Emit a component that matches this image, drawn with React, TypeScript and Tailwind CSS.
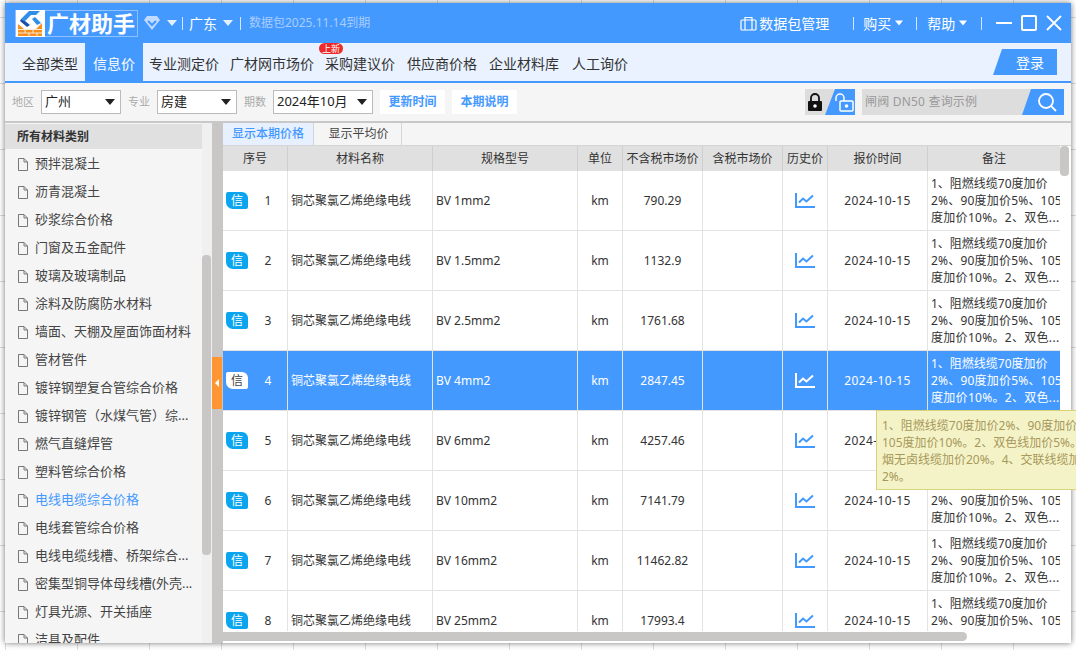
const FONT = "font-['Noto_Sans','Noto_Sans_CJK_SC',sans-serif]";

const CATEGORIES = [
  "预拌混凝土",
  "沥青混凝土",
  "砂浆综合价格",
  "门窗及五金配件",
  "玻璃及玻璃制品",
  "涂料及防腐防水材料",
  "墙面、天棚及屋面饰面材料",
  "管材管件",
  "镀锌钢塑复合管综合价格",
  "镀锌钢管（水煤气管）综...",
  "燃气直缝焊管",
  "塑料管综合价格",
  "电线电缆综合价格",
  "电线套管综合价格",
  "电线电缆线槽、桥架综合...",
  "密集型铜导体母线槽(外壳...",
  "灯具光源、开关插座",
  "洁具及配件",
];

const ROWS = [
  { no: 1, spec: "BV 1mm2", price: "790.29" },
  { no: 2, spec: "BV 1.5mm2", price: "1132.9" },
  { no: 3, spec: "BV 2.5mm2", price: "1761.68" },
  { no: 4, spec: "BV 4mm2", price: "2847.45" },
  { no: 5, spec: "BV 6mm2", price: "4257.46" },
  { no: 6, spec: "BV 10mm2", price: "7141.79" },
  { no: 7, spec: "BV 16mm2", price: "11462.82" },
  { no: 8, spec: "BV 25mm2", price: "17993.4" },
];

function Caret({ className }: { className: string }) {
  return (
    <svg width="10" height="6" viewBox="0 0 10 6" className={className}>
      <path d="M0 0h10L5 6z" fill="currentColor" />
    </svg>
  );
}

function Divider({ className }: { className: string }) {
  return <div className={"h-[13px] w-px bg-[#d5e6ff] " + className} />;
}

function Logo() {
  return (
    <div className="flex h-[27px] w-[123px] items-center border border-[#8fc0ff]">
      <svg width="29" height="27" viewBox="0 0 29 27" className="shrink-0 bg-white">
        <path d="M13 1h11l-4 4h-5L9 11 5 9z" fill="#2f8fe8" />
        <path d="M5 9l4 2 5 4-3 2-7-6z" fill="#1b4fa8" />
        <path d="M16 9l3-2 6 6-4 2z" fill="#2f8fe8" />
        <path d="M2 14l6 5h12l6-6v13H2z" fill="#f5901e" />
        <path d="M2 19.500h24M2 23h24M9 19.500V23M17 19.500V23M13 23v3M21 23v3" stroke="white" strokeWidth="0.8" fill="none" />
      </svg>
      <span className="ml-[2px] whitespace-nowrap text-[22px] leading-[27px] font-bold text-white">广材助手</span>
    </div>
  );
}

function TitleBar() {
  return (
    <div className="flex h-10 shrink-0 items-center bg-[#4499ff] text-[14px] text-white">
      <div className="ml-[10px]">
        <Logo />
      </div>
      <svg width="18" height="16" viewBox="0 0 18 16" className="ml-[5px]">
        <path d="M4 1h10l3 4-8 10L1 5z" fill="#c0dbff" />
        <path d="M5 6l4 4 4-4" fill="none" stroke="#4499ff" strokeWidth="2.200" />
      </svg>
      <Caret className="ml-[6px] text-[#e3efff]" />
      <Divider className="ml-[5px]" />
      <span className="ml-[6px]">广东</span>
      <Caret className="ml-[6px] text-[#e3efff]" />
      <Divider className="ml-[7px]" />
      <span className="ml-2 text-[12px] whitespace-nowrap text-[#a9cdff]">数据包2025.11.14到期</span>
      <svg width="17" height="15" viewBox="0 0 17 15" className="ml-[370px]" fill="none" stroke="white" strokeWidth="1.2">
        <rect x="1" y="4" width="15" height="10" rx="1" />
        <path d="M5 14V1.500h7V14" />
      </svg>
      <span className="ml-[2px] whitespace-nowrap">数据包管理</span>
      <Divider className="ml-6" />
      <span className="ml-[9px]">购买</span>
      <Caret className="ml-1 w-2 text-white" />
      <Divider className="ml-[13px]" />
      <span className="ml-[10px]">帮助</span>
      <Caret className="ml-1 w-2 text-white" />
      <Divider className="ml-[14px]" />
      <svg width="16" height="16" viewBox="0 0 16 16" className="ml-[14px]">
        <path d="M0 8h16" stroke="white" strokeWidth="2" />
      </svg>
      <svg width="16" height="16" viewBox="0 0 16 16" className="ml-[9px]">
        <rect x="1" y="1" width="14" height="14" rx="1" fill="none" stroke="white" strokeWidth="2" />
      </svg>
      <svg width="16" height="16" viewBox="0 0 16 16" className="ml-[9px]">
        <path d="M1 1l14 14M15 1 1 15" stroke="white" strokeWidth="1.800" />
      </svg>
    </div>
  );
}

function TabBar() {
  return (
    <div className="flex h-10 shrink-0 border-b-2 border-[#4499ff] bg-[#eaf2ff] text-[14px] whitespace-nowrap text-[#333]">
      <div className="ml-[17px] flex items-center pt-[2px]">全部类型</div>
      <div className="ml-[7px] flex w-[58px] items-center justify-center bg-[#4499ff] pt-[2px] text-white">信息价</div>
      <div className="ml-[6px] flex items-center pt-[2px]">专业测定价</div>
      <div className="ml-[11px] flex items-center pt-[2px]">广材网市场价</div>
      <div className="relative ml-[11px] flex items-center pt-[2px]">
        采购建议价
        <span className="absolute top-0 left-[-6px] flex h-[11px] w-6 items-center justify-center rounded-full bg-[#ee2a2a] text-[9px] text-white">上新</span>
      </div>
      <div className="ml-3 flex items-center pt-[2px]">供应商价格</div>
      <div className="ml-3 flex items-center pt-[2px]">企业材料库</div>
      <div className="ml-[13px] flex items-center pt-[2px]">人工询价</div>
      <div className="mt-[6px] ml-[365px] flex h-[26px] w-16 items-center justify-center bg-[#4499ff] pl-[10px] text-white [clip-path:polygon(9px_0,100%_0,100%_100%,0_100%)]">登录</div>
    </div>
  );
}

function Select({ value, width }: { value: string; width: string }) {
  return (
    <div className={"flex h-6 items-center justify-between border border-[#bbb] bg-white pr-[5px] pl-[3px] text-[13px] text-[#222] " + width}>
      <span>{value}</span>
      <Caret className="text-[#222]" />
    </div>
  );
}

function Toolbar() {
  return (
    <div className="flex h-10 shrink-0 items-center border-b-2 border-[#c8c8c8] bg-[#f5f5f5] text-[12px] text-[#aaa]">
      <span className="ml-[7px] w-[22px] text-[11px] whitespace-nowrap">地区</span>
      <div className="ml-[7px]"><Select value="广州" width="w-20" /></div>
      <span className="ml-[7px] w-[22px] text-[11px] whitespace-nowrap">专业</span>
      <div className="ml-[7px]"><Select value="房建" width="w-20" /></div>
      <span className="ml-[7px] w-[22px] text-[11px] whitespace-nowrap">期数</span>
      <div className="ml-[7px]"><Select value="2024年10月" width="w-[100px]" /></div>
      <div className="ml-[7px] flex h-6 w-[65px] items-center justify-center bg-white font-bold text-[#4499ff]">更新时间</div>
      <div className="ml-[7px] flex h-6 w-[65px] items-center justify-center bg-white font-bold text-[#4499ff]">本期说明</div>

      <div className="relative ml-[288px] flex h-[26px] w-[50px] items-center bg-[#ddd]">
        <svg width="16" height="19" viewBox="0 0 16 19" className="ml-[2px]">
          <path d="M4 9V5a4 4 0 0 1 8 0v4" fill="none" stroke="#111" strokeWidth="1.800" />
          <rect x="1" y="8" width="14" height="10" rx="1" fill="#111" />
          <circle cx="8" cy="13" r="1.800" fill="white" />
        </svg>
        <div className="absolute inset-y-0 right-0 flex w-[30px] items-center justify-end bg-[#4499ff] pr-px [clip-path:polygon(10px_0,100%_0,100%_100%,0_100%)]">
          <svg width="19" height="19" viewBox="0 0 19 19">
            <path d="M1 8V5a4 4 0 0 1 8 0v3" fill="none" stroke="white" strokeWidth="1.500" />
            <rect x="5" y="8" width="13" height="10" rx="1" fill="none" stroke="white" strokeWidth="1.500" />
            <circle cx="11.500" cy="13" r="1.800" fill="white" />
          </svg>
        </div>
      </div>

      <div className="relative ml-[7px] flex h-[26px] w-[202px] items-center bg-[#ddd] pl-[3px] tracking-[0.2px] text-[#999]">
        闸阀 DN50 查询示例
        <div className="absolute inset-y-0 right-0 flex w-[42px] items-center justify-end bg-[#4499ff] pr-[7px] [clip-path:polygon(9px_0,100%_0,100%_100%,0_100%)]">
          <svg width="20" height="20" viewBox="0 0 20 20" fill="none" stroke="white" strokeWidth="1.800">
            <circle cx="9" cy="9" r="7" />
            <path d="M14 14l5 5" />
          </svg>
        </div>
      </div>
    </div>
  );
}

function DocIcon() {
  return (
    <svg width="10" height="13" viewBox="0 0 10 13" className="shrink-0" fill="none" stroke="#777" strokeWidth="1">
      <path d="M.5.500h5.500l3.500 3.500v8.500h-9zM6 .5v3.500h3.500" />
    </svg>
  );
}

function Sidebar() {
  return (
    <div className="flex w-[207px] shrink-0 overflow-hidden bg-[#f5f5f5]">
      <div className="w-[197px] shrink-0">
        <div className="mt-px flex h-[25px] items-center bg-[#e0e0e0] pl-3 text-[12px] font-bold text-[#333]">所有材料类别</div>
        <div className="bg-[#f5f5f5] pt-px pl-[13px] text-[13px] whitespace-nowrap text-[#444]">
          {CATEGORIES.map((name) => (
            <div key={name} className={"flex h-7 items-center gap-[7px] " + (name === "电线电缆综合价格" ? "text-[#4499ff]" : "")}>
              <DocIcon />
              <span>{name}</span>
            </div>
          ))}
        </div>
      </div>
      <div className="w-[10px] shrink-0 bg-[#f0f0f0] pt-[132px]">
        <div className="h-[300px] w-[9px] rounded-[4px] bg-[#c8c7c5]" />
      </div>
    </div>
  );
}

function Splitter() {
  return (
    <div className="relative w-[11px] shrink-0 bg-[#c8c7c5]">
      <div className="absolute top-[234px] left-0 flex h-[52px] w-[10px] items-center justify-center bg-[#ff9533]">
        <svg width="4" height="8" viewBox="0 0 4 8">
          <path d="M4 0v8L0 4z" fill="white" />
        </svg>
      </div>
    </div>
  );
}

const COLS = {
  no: "w-[65px]",
  name: "w-[145px]",
  spec: "w-[145px]",
  unit: "w-[45px]",
  price: "w-[80px]",
  tax: "w-[80px]",
  hist: "w-[45px]",
  date: "w-[100px]",
  note: "w-[132px]",
};

function HeaderCell({ width, children }: { width: string; children: string }) {
  return (
    <div className={"flex shrink-0 items-center justify-center border-r border-[#cfcfcf] whitespace-nowrap " + width}>{children}</div>
  );
}

function TableHeader() {
  return (
    <div className="flex h-[25px] bg-[#e0e0e0] text-[12px] text-[#333]">
      <HeaderCell width={COLS.no}>序号</HeaderCell>
      <HeaderCell width={COLS.name}>材料名称</HeaderCell>
      <HeaderCell width={COLS.spec}>规格型号</HeaderCell>
      <HeaderCell width={COLS.unit}>单位</HeaderCell>
      <HeaderCell width={COLS.price}>不含税市场价</HeaderCell>
      <HeaderCell width={COLS.tax}>含税市场价</HeaderCell>
      <HeaderCell width={COLS.hist}>历史价</HeaderCell>
      <HeaderCell width={COLS.date}>报价时间</HeaderCell>
      <div className={"flex shrink-0 items-center justify-center " + COLS.note}>备注</div>
    </div>
  );
}

function ChartIcon({ color }: { color: string }) {
  return (
    <svg width="20" height="15" viewBox="0 0 20 15" fill="none" stroke={color}>
      <path d="M1 0v14h19" strokeWidth="2" />
      <path d="M4 9.500l4-4 3.500 3L18 2.500" strokeWidth="2" />
    </svg>
  );
}

function Row({ no, spec, price }: { no: number; spec: string; price: string }) {
  const active = no === 4;
  const cell = "flex shrink-0 items-center border-r border-[#e3e3e3] ";
  return (
    <div className={"flex h-[60px] shrink-0 border-b border-[#e3e3e3] text-[12px] whitespace-nowrap " + (active ? "bg-[#4499ff] text-white" : "bg-white text-[#333]")}>
      <div className={cell + COLS.no + " pl-[3px]"}>
        <span className={"flex h-[17px] w-[22px] items-center justify-center rounded-tl-[2px] rounded-tr-[6px] rounded-br-[2px] rounded-bl-[7px] text-[12px] " + (active ? "bg-white text-[#444]" : "bg-[#0aa5ee] text-white")}>信</span>
        <span className="ml-[13px] w-[14px] text-center">{no}</span>
      </div>
      <div className={cell + COLS.name + " pl-[3px]"}>铜芯聚氯乙烯绝缘电线</div>
      <div className={cell + COLS.spec + " pl-[3px]"}>{spec}</div>
      <div className={cell + COLS.unit + " justify-center"}>km</div>
      <div className={cell + COLS.price + " justify-center"}>{price}</div>
      <div className={cell + COLS.tax} />
      <div className={cell + COLS.hist + " justify-center"}>
        <ChartIcon color={active ? "white" : "#4499ff"} />
      </div>
      <div className={cell + COLS.date + " justify-center tracking-[0.4px]"}>2024-10-15</div>
      <div className={"flex shrink-0 flex-col justify-center overflow-hidden pl-[3px] leading-[17px] " + COLS.note}>
        <div>1、阻燃线缆70度加价</div>
        <div className="tracking-[0.2px]">2%、90度加价5%、105</div>
        <div className="tracking-[0.3px]">度加价10%。2、双色...</div>
      </div>
    </div>
  );
}

function PriceTable() {
  return (
    <div className="relative flex min-w-0 flex-1 flex-col bg-white">
      <div className="flex h-[23px] shrink-0 border-b border-[#d5d5d5] bg-[#f5f5f5] text-[12px]">
        <div className="flex w-[90px] items-center justify-center bg-[#e6f0ff] font-medium text-[#4499ff]">显示本期价格</div>
        <div className="flex w-[89px] items-center justify-center border-x border-[#d5d5d5] pl-[2px] text-[#444]">显示平均价</div>
      </div>
      <div className="flex min-h-0 flex-1">
        <div className="flex w-[837px] shrink-0 flex-col">
          <TableHeader />
          <div className="flex h-[460px] flex-col overflow-hidden">
            {ROWS.map((r) => (
              <Row key={r.no} {...r} />
            ))}
          </div>
          <div className="mt-px h-[9px] w-[744px] rounded-r-[5px] bg-[#c8c7c5]" />
        </div>
        <div className="w-[11px] shrink-0">
          <div className="h-[30px] w-[9px] rounded-[4px] bg-[#c8c7c5]" />
        </div>
      </div>

      <div className="absolute top-[287px] left-[653px] h-[80px] w-[202px] overflow-hidden border border-[#d8d27a] bg-[#f4f3c8] py-[6px] pl-[5px] text-[12px] leading-[17px] whitespace-nowrap text-[#a8985a]">
        <div>1、阻燃线缆70度加价2%、90度加价5%、</div>
        <div>105度加价10%。2、双色线加价5%。3、低</div>
        <div>烟无卤线缆加价20%。4、交联线缆加价</div>
        <div>2%。</div>
      </div>
    </div>
  );
}

export default function App() {
  return (
    <div className={"h-[650px] w-[1076px] overflow-hidden bg-white bg-[linear-gradient(#dcdcdc_1px,transparent_1px),linear-gradient(90deg,#dcdcdc_1px,transparent_1px)] bg-[size:72px_66px] bg-[position:5px_17px] pt-[3px] pl-[5px] " + FONT}>
      <div className="flex h-[640px] w-[1066px] flex-col bg-white shadow-[0_0_6px_rgba(0,0,0,0.55)]">
        <TitleBar />
        <TabBar />
        <Toolbar />
        <div className="flex min-h-0 flex-1">
          <Sidebar />
          <Splitter />
          <PriceTable />
        </div>
      </div>
    </div>
  );
}
